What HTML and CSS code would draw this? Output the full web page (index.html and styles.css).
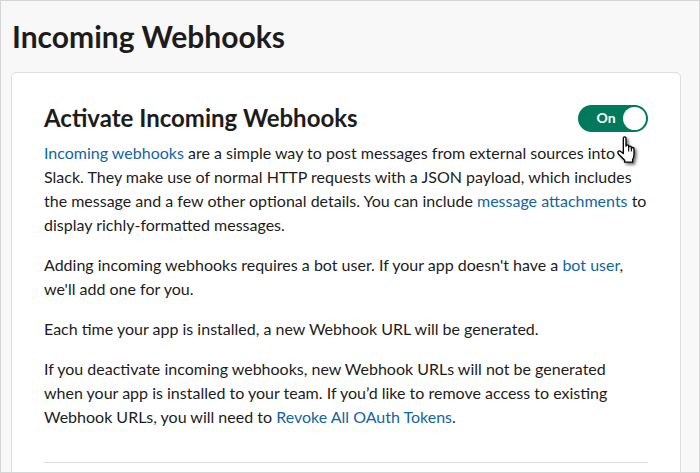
FILE: index.html
```html
<!DOCTYPE html>
<html lang="en">
<head>
<meta charset="utf-8">
<title>Incoming Webhooks</title>
<link rel="stylesheet" href="styles.css">
</head>
<body>
<div class="page">
  <h1 class="page-title">Incoming Webhooks</h1>
  <section class="card">
    <div class="card-header">
      <h2 class="card-title">Activate Incoming Webhooks</h2>
      <div class="toggle-wrap">
        <div class="toggle">
          <span class="toggle-label">On</span>
          <span class="toggle-knob"></span>
        </div>
        <svg class="cursor" viewBox="0 0 15 20" width="20" height="27" aria-hidden="true">
          <path d="M5.5 1.5 Q5.5 0.5 6.5 0.5 Q7.5 0.5 7.5 1.5 V7.5 Q7.5 6.5 8.5 6.5 Q9.5 6.5 9.5 7.5 V8.5 Q9.5 7.5 10.5 7.5 Q11.5 7.5 11.5 8.5 V9.5 Q11.5 8.5 12.5 8.5 Q13.5 8.5 13.5 9.5 V14 Q13.5 16 12.5 17.5 V19.5 H6.5 V18 L2 13.5 Q1 12.5 1.5 11.5 Q2.5 10.5 3.5 11.5 L5.5 13 Z" fill="#fff" stroke="#000" stroke-width="1" stroke-linejoin="round"/>
          <path d="M9.5 8.5 V11.5 M11.5 9.5 V11.5" stroke="#000" stroke-width="0.8" fill="none"/>
        </svg>
      </div>
    </div>
    <p><a href="#">Incoming webhooks</a> are a simple way to post messages from external sources into Slack. They make use of normal HTTP requests with a JSON payload, which includes the message and a few other optional details. You can include <a href="#">message attachments</a> to display richly-formatted messages.</p>
    <p>Adding incoming webhooks requires a bot user. If your app doesn't have a <a href="#">bot user</a>, we'll add one for you.</p>
    <p>Each time your app is installed, a new Webhook URL will be generated.</p>
    <p>If you deactivate incoming webhooks, new Webhook URLs will not be generated when your app is installed to your team. If you’d like to remove access to existing Webhook URLs, you will need to <a href="#">Revoke All OAuth Tokens</a>.</p>
    <hr class="divider">
  </section>
</div>
</body>
</html>
```

FILE: styles.css
```css
* { box-sizing: border-box; }
html, body { margin: 0; padding: 0; }
body {
  width: 700px;
  height: 473px;
  overflow: hidden;
  background: #f8f8f8;
  border: 1px solid #d6d6d6;
  font-family: Lato, "Noto Sans", sans-serif;
  color: #1d1c1d;
}
.page {
  padding: 15px 18px 0 10px;
}
.page-title {
  margin: 0 0 16px 1px;
  font-size: 30px;
  line-height: 40px;
  font-weight: 700;
  color: #1d1c1d;
}
.card {
  background: #fff;
  border: 1px solid #dedede;
  border-radius: 5px;
  padding: 29px 32px 40px 32px;
}
.card-header {
  display: flex;
  align-items: center;
  justify-content: space-between;
  margin-bottom: 7px;
}
.card-title {
  margin: 0;
  font-size: 24px;
  line-height: 32px;
  font-weight: 700;
}
.toggle-wrap {
  position: relative;
}
.toggle {
  width: 70px;
  height: 27px;
  border-radius: 14px;
  background: #007a5a;
  display: flex;
  align-items: center;
  padding: 2px 2px 2px 11px;
}
.toggle-label {
  flex: 1;
  text-align: center;
  color: #fff;
  font-weight: 700;
  font-size: 14px;
  line-height: 16px;
}
.toggle-knob {
  width: 23px;
  height: 23px;
  border-radius: 50%;
  background: #fff;
}
.cursor {
  position: absolute;
  left: 38px;
  top: 31px;
  filter: drop-shadow(2px 2px 1.5px rgba(0,0,0,0.55));
}
p {
  margin: 0 0 16px 0;
  font-size: 16px;
  line-height: 24px;
}
a {
  color: #1264a3;
  text-decoration: none;
}
.divider {
  border: 0;
  border-top: 1px solid #dddddd;
  margin: 33px 0 0 0;
}
```
